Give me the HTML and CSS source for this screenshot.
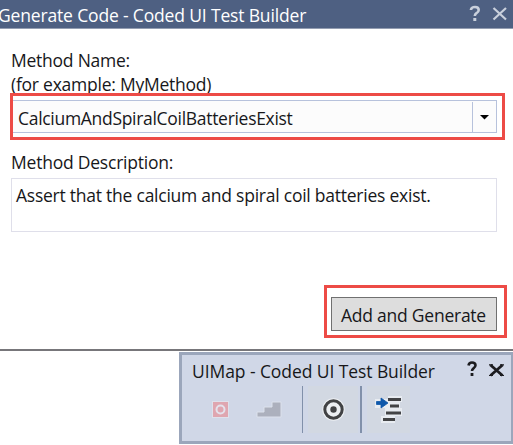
FILE: index.html
```html
<!DOCTYPE html>
<html lang="en">
<head>
<meta charset="utf-8">
<title>Coded UI Test Builder</title>
<link rel="stylesheet" href="styles.css">
</head>
<body>
<section class="dialog">
  <header class="titlebar">
    <span class="t title">Generate Code - Coded UI Test Builder</span>
    <svg class="controls" width="42" height="28" viewBox="0 0 42 28" fill="none" stroke="#c9d0dc">
      <path d="M2 10V9.5Q2.5 7 6 7Q9.7 7 9.7 10Q9.7 12 7.5 13.2Q5.8 14.2 5.8 16" stroke-width="2.6"/>
      <path d="M5.8 18V21" stroke-width="3"/>
      <path d="M24.500 8L37 19.500M37 8L24.500 19.500" stroke-width="2.200"/>
    </svg>
  </header>
  <div class="form">
    <div class="row"><span class="t name">Method Name:</span></div>
    <div class="row"><span class="t example">(for example: MyMethod)</span></div>
    <div class="combo">
      <div class="value"><span class="t combo-text">CalciumAndSpiralCoilBatteriesExist</span></div>
      <div class="drop"><svg width="9" height="5" viewBox="0 0 9 5"><path d="M0 0H9L4.500 4.500Z"/></svg></div>
      <div class="mark mark-combo"></div>
    </div>
    <div class="row desc-row"><span class="t desc">Method Description:</span></div>
    <div class="area"><span class="t area-text">Assert that the calcium and spiral coil batteries exist.</span></div>
    <div class="button"><span class="t button-text">Add and Generate</span><div class="mark mark-button"></div></div>
  </div>
</section>
<section class="toolbar">
  <header class="tool-head">
    <span class="t tool-title">UIMap - Coded UI Test Builder</span>
    <svg class="tool-controls" width="42" height="24" viewBox="0 0 42 24" fill="none" stroke="#1c1c20">
      <path d="M2.500 8.500Q3 5.500 6 5.500Q9.500 5.500 9.500 8.300Q9.500 10 7.500 11.300Q6 12.300 6 14" stroke-width="2.600"/>
      <path d="M6 16V19" stroke-width="2.800"/>
      <path d="M24.500 8L36.500 18.500M36.500 8L24.500 18.500" stroke-width="2.800"/>
      <path d="M23 7.800H27M34 7.800H38M23 18.500H27M34 18.500H38" stroke-width="1.200"/>
    </svg>
  </header>
  <div class="tools">
    <div class="tool record"><svg width="19" height="19" viewBox="0 0 19 19"><path d="M1 1H18V18H1Z" fill="#dfe1eb"/><path d="M2 2H17V17H2Z" fill="#dfa6b0"/><circle cx="9.500" cy="9.500" r="4" fill="#dfa6b0" stroke="#e4e2ec" stroke-width="2"/></svg></div>
    <div class="tool steps"><svg width="28" height="19" viewBox="0 0 28 19"><path d="M2 17V12H9V7H17V2H26V17Z" fill="#acb0bd" stroke="#dce1ec" stroke-width="1"/></svg></div>
    <div class="tool lit"><svg width="25" height="25" viewBox="0 0 25 25"><circle cx="12.500" cy="12.500" r="11.200" fill="#edf0f3"/><circle cx="12.500" cy="12.500" r="8.700" fill="#eceff2" stroke="#414244" stroke-width="3"/><circle cx="12.500" cy="12.500" r="3.200" fill="#414244"/></svg></div>
    <div class="tool lit code"><svg width="28" height="28" viewBox="0 0 28 28"><path d="M13 0H27V6H25V12H27V20H20V27H6V20H10V12H0V3H13Z" fill="#e8ecf1"/><path d="M13 3.500H26M15 10H24M11 17H26M8 23.500H20" stroke="#434446" stroke-width="3.200"/><path d="M1.500 5.500H6V2L13 7L6 12V8.500H1.500Z" fill="#0d57aa" stroke="#0d57aa" stroke-width="0.800"/></svg></div>
  </div>
</section>
</body>
</html>
```
FILE: styles.css
```css
* { box-sizing: border-box; }
body {
  margin: 0;
  width: 513px;
  height: 445px;
  overflow: hidden;
  background: #fff;
  color: #17171a;
  font: 17.5px/24px "Open Sans", "Noto Sans", sans-serif;
}
svg { display: block; flex: none; }
.t { display: block; flex: none; white-space: nowrap; letter-spacing: -0.24px; }
.dialog { height: 351px; border-bottom: 2px solid #77767a; }
.titlebar {
  display: flex;
  justify-content: space-between;
  height: 29px;
  padding-right: 2px;
  background: #4e6082;
  border-bottom: 1px solid #939db1;
  color: #fff;
}
.title { margin: 3px 0 0 -2px; letter-spacing: -0.16px; }
.form { padding: 19px 16px 0 11px; }
.row { display: flex; height: 24px; }
.combo {
  position: relative;
  display: flex;
  height: 33px;
  margin-top: 4px;
  border: 1px solid #b7c2dc;
  background: #fcfcfc;
}
.value { flex: 1; padding: 5px 0 0 6px; }
.combo-text { letter-spacing: -0.3px; }
.drop {
  display: flex;
  align-items: center;
  justify-content: center;
  width: 24px;
  margin-top: 1px;
  border-left: 1px solid #b7c2dc;
}
.mark { position: absolute; border: 3px solid #ed4b46; }
.mark-combo { inset: -8px -9px -8px -2px; }
.desc-row { margin-top: 17px; }
.desc { letter-spacing: -0.22px; }
.area { height: 54px; margin-top: 4px; padding: 4px 0 0 4px; border: 1px solid #dfdfea; }
.area-text { letter-spacing: -0.24px; }
.button {
  position: relative;
  display: flex;
  width: 166px;
  height: 34px;
  margin: 65px 0 0 auto;
  padding: 5px 0 0 9px;
  border: 1px solid #707070;
  background: #ddd;
}
.mark-button { inset: -13px -11px -8px -8px; }
.toolbar {
  width: 334px;
  height: 92px;
  margin: 1px 0 0 179px;
  padding: 2px 3px;
  border: 3px solid #9ba6bb;
  border-right-width: 2px;
  background: #d0d7e7;
}
.tool-head { display: flex; justify-content: space-between; height: 29px; }
.tool-title { margin: 2px 0 0 7px; letter-spacing: -0.08px; }
.tools { display: flex; height: 47px; }
.tool { display: flex; align-items: center; justify-content: center; }
.record { width: 70px; }
.steps { width: 47px; justify-content: flex-start; }
.lit {
  width: 58px;
  padding: 0 2px 0 5px;
  border-left: 1px solid #8190aa;
  background: #d2d8e2 content-box;
}
.code { width: 52px; border-left-width: 2px; }
```
